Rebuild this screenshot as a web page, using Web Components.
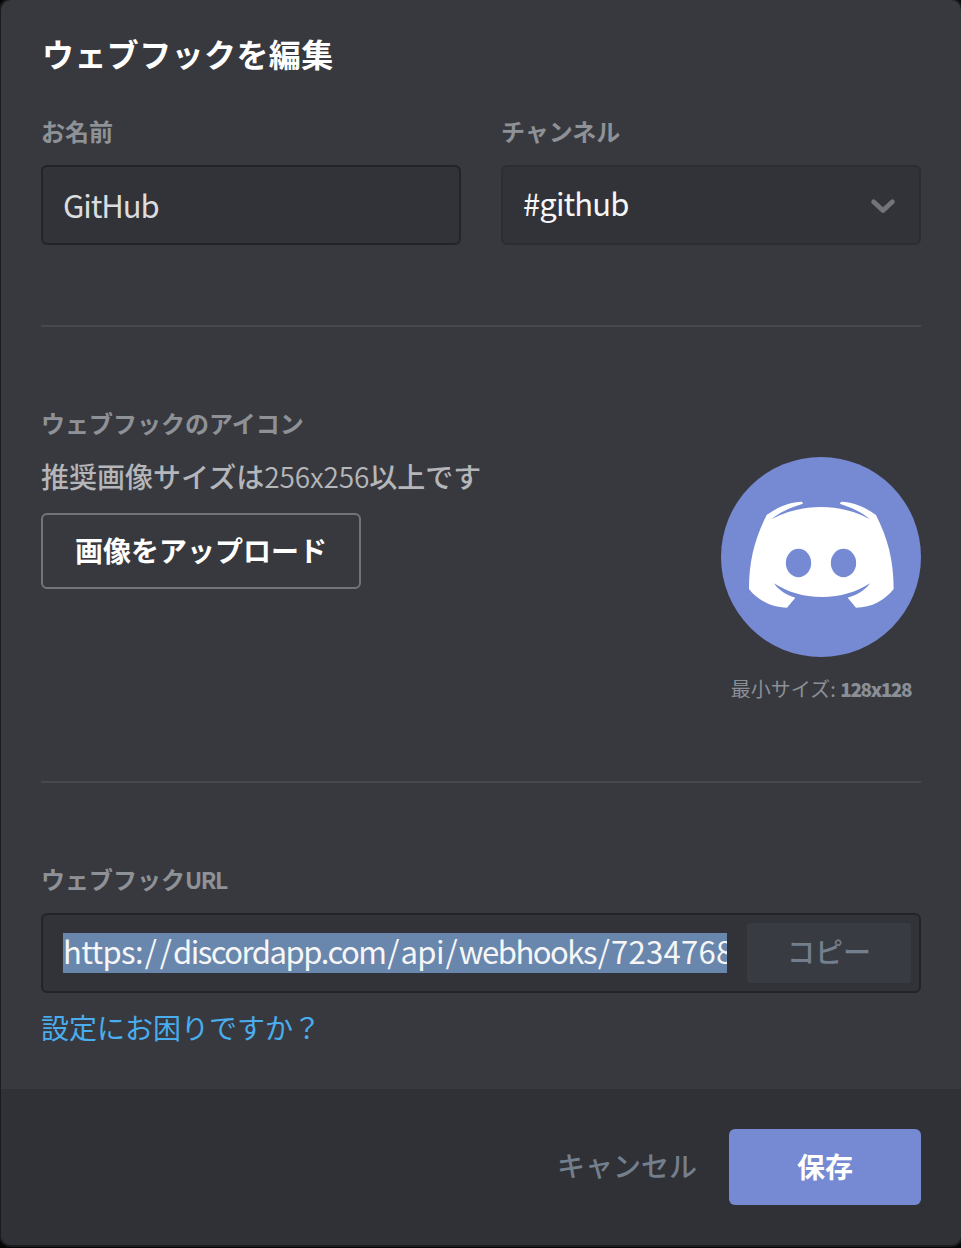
<!DOCTYPE html>
<html lang="ja">
<head>
<meta charset="utf-8">
<title>ウェブフックを編集</title>
<style>
html,body{margin:0;background:#060607}
body{width:961px;height:1248px;overflow:hidden;font-family:"Noto Sans CJK JP",sans-serif;color:#fff}
</style>
</head>
<body>
<webhook-modal></webhook-modal>
<script>
const define = (name, css, html) => customElements.define(name, class extends HTMLElement {
  constructor() {
    super();
    const t = document.createElement('template');
    t.innerHTML = `<style>*{box-sizing:border-box}${css}</style>${html}`;
    this.attachShadow({mode: 'open'}).append(t.content.cloneNode(true));
  }
});

define('field-label', `:host{display:block;height:32px;line-height:32px;font-size:24px;font-weight:700;color:#8e9297;white-space:nowrap}`, `<slot></slot>`);

define('field-box', `
:host{box-sizing:border-box;display:flex;align-items:center;height:80px;margin-top:18px;padding:0 8px 0 20px;border:2px solid var(--edge,#232428);border-radius:6px;background:#323338;font-size:31px;line-height:40px;color:var(--ink,#dcddde);white-space:nowrap}`, `<slot></slot>`);

define('chevron-icon', `:host{display:block;width:28px;height:20px}svg{display:block}`,
`<svg width="28" height="20" viewBox="0 0 28 20"><path d="M4.6 6.8 14 15.5 23.4 6.8" fill="none" stroke="#72747a" stroke-width="4.8" stroke-linecap="round" stroke-linejoin="round"/></svg>`);

define('rule-line', `:host{display:block;height:2px;background:#46484e}`, ``);

define('ui-button', `
:host{display:block}
button{display:flex;align-items:center;justify-content:center;width:100%;height:100%;margin:0;padding:0;border:var(--line,0);border-radius:var(--radius,6px);background:var(--fill,transparent);color:inherit;font:inherit;line-height:40px}
span{margin-top:var(--shift,-4px);white-space:nowrap}`, `<button><span><slot></slot></span></button>`);

define('webhook-avatar', `:host{display:block;width:200px;height:200px}svg{display:block}`,
`<svg width="200" height="200" viewBox="63 51 600 600"><circle cx="363" cy="351" r="300" fill="#768ad4"/>
<path fill="#fff" d="M306 185C265 187 232 202 200 225C165 295 147 360 147 447C172 480 215 503 261 503L286 473C258 466 236 450 222 430C262 456 310 471 366 471C422 471 470 456 510 430C496 450 472 466 443 473L468 503C515 503 555 480 581 447C581 360 563 295 528 225C496 202 463 187 424 185L419 191C455 202 485 217 510 238C465 213 415 201 364 201C310 201 260 213 214 238C240 217 270 202 309 191Z"/>
<g fill="#768ad4"><ellipse cx="295.5" cy="369" rx="38" ry="42.5"/><ellipse cx="430.5" cy="369" rx="38" ry="42.5"/></g></svg>`);

define('webhook-modal', `
:host{display:block;padding:0 0 0 1px}
.modal{display:flex;flex-direction:column;width:960px;height:1245px;border-radius:10px;background:#38393e;overflow:hidden;box-shadow:0 0 0 2px #1b1c1e}
main{height:1089px;padding:33px 40px 0}
h1{margin:0 0 42px;padding-left:1px;font-size:32px;line-height:40px;font-weight:700;letter-spacing:.4px}
.pair{display:grid;grid-template-columns:1fr 1fr;gap:40px;margin-bottom:80px}
.name{letter-spacing:-1.1px;margin-top:-1px}
.chan{letter-spacing:-.9px;margin-top:-5px}
.pick{--edge:#2c2d32;--ink:#f6f6f7;justify-content:space-between;padding-right:22px}
.caps{font-size:23px;letter-spacing:-1.5px}
.icon{display:flex;justify-content:space-between;height:454px;padding-top:80px}
.desc{height:40px;margin-top:17px;font-size:28px;line-height:40px;font-weight:500;color:#b4b6ba;white-space:nowrap}
.light{font-weight:350;letter-spacing:-.1px}
.upload{width:320px;height:76px;margin-top:17px;font-size:28px;font-weight:700;--line:2px solid #72747a;--shift:-3px}
aside{display:flex;flex-direction:column;align-items:center;width:200px;padding-top:50px}
small{margin-top:16px;font-size:20px;line-height:32px;color:#8a8f97;white-space:nowrap}
small b{font-size:19px;font-weight:900;letter-spacing:-1.4px}
.hook{padding-top:80px}
.url{flex:none;width:664px;height:40px;overflow:hidden;background:#6986ad;color:#f6f6f7}
.url span{display:block;margin-top:-2px;letter-spacing:-.66px}
.url i{font-style:normal;padding:0 1.75px}
.url .tight{padding:0;letter-spacing:-1.48px}
.url .num{padding:0;letter-spacing:.3px}
.copy{flex:none;width:164px;height:60px;margin-left:20px;font-size:28px;font-weight:500;color:#747f8d;--fill:#393b42;--radius:4px}
a{display:block;margin-top:14px;height:40px;line-height:40px;font-size:28px;color:#49adee;text-decoration:none}
footer{display:flex;justify-content:flex-end;align-items:flex-start;height:156px;padding:40px 40px 0;background:#303136;font-size:28px}
.cancel{width:140px;height:76px;margin-right:32px;font-weight:500;color:#747f8d}
.save{width:192px;height:76px;font-weight:700;--fill:#768ad4;--shift:-3px}
`, `
<div class="modal">
<main>
  <h1>ウェブフックを編集</h1>
  <div class="pair">
    <div><field-label>お名前</field-label><field-box><span class="name">GitHub</span></field-box></div>
    <div><field-label>チャンネル</field-label><field-box class="pick"><span class="chan">#github</span><chevron-icon></chevron-icon></field-box></div>
  </div>
  <rule-line></rule-line>
  <section class="icon">
    <div><field-label>ウェブフックのアイコン</field-label>
      <div class="desc">推奨画像サイズは<span class="light">256x256</span>以上です</div>
      <ui-button class="upload">画像をアップロード</ui-button></div>
    <aside><webhook-avatar></webhook-avatar><small>最小サイズ: <b>128x128</b></small></aside>
  </section>
  <rule-line></rule-line>
  <section class="hook">
    <field-label>ウェブフック<span class="caps">URL</span></field-label>
    <field-box><div class="url"><span>https:<i>/</i><i>/</i><i class="tight">discordapp.com</i><i>/</i>api<i>/</i><i class="tight">webhooks</i><i>/</i><i class="num">7234768</i></span></div><ui-button class="copy">コピー</ui-button></field-box>
    <a>設定にお困りですか？</a>
  </section>
</main>
<footer><ui-button class="cancel">キャンセル</ui-button><ui-button class="save">保存</ui-button></footer>
</div>`);
</script>
</body>
</html>
